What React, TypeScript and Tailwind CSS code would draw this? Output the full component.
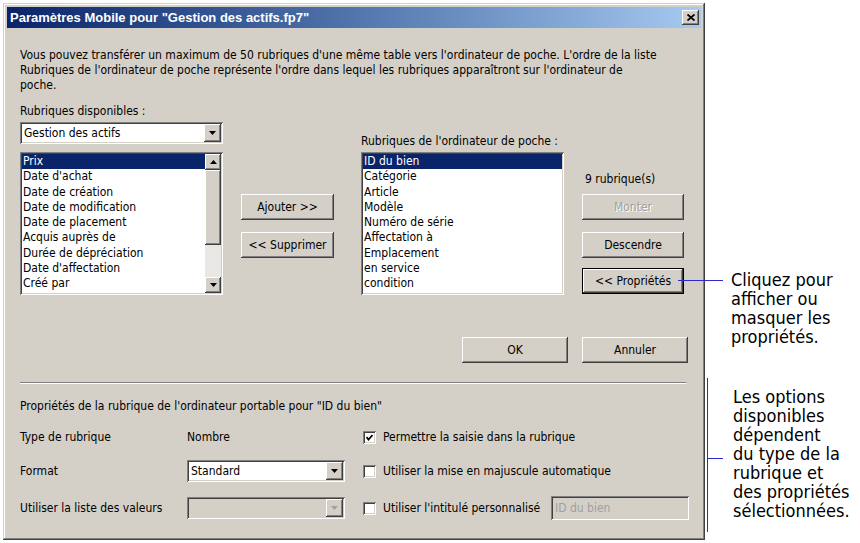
import React from 'react';

const raised =
  'bg-[#d4d0c8] shadow-[inset_-1px_-1px_#404040,inset_1px_1px_#ffffff,inset_-2px_-2px_#808080,inset_2px_2px_#d4d0c8]';
const sunken =
  'shadow-[inset_1px_1px_#808080,inset_-1px_-1px_#ffffff,inset_2px_2px_#404040,inset_-2px_-2px_#d4d0c8]';

function Arrow({ dir = 'down', disabled = false }: { dir?: 'up' | 'down'; disabled?: boolean }) {
  const pts = dir === 'down' ? '0,0 7,0 3.5,4' : '0,4 7,4 3.5,0';
  return (
    <svg width="7" height="4" viewBox="0 0 7 4">
      <polygon points={pts} fill={disabled ? '#a0a0a0' : '#000'} />
    </svg>
  );
}

function Button({
  children,
  w,
  disabled,
  isDefault,
}: {
  children: React.ReactNode;
  w: string;
  disabled?: boolean;
  isDefault?: boolean;
}) {
  if (isDefault) {
    return (
      <div className={`${w} h-[26px] border border-black flex`}>
        <div className={`${raised} flex-1 flex items-center justify-center`}>{children}</div>
      </div>
    );
  }
  return (
    <div
      className={`${raised} ${w} h-[26px] flex items-center justify-center ${
        disabled ? 'text-[#a0a0a0] [text-shadow:1px_1px_#fff]' : ''
      }`}
    >
      {children}
    </div>
  );
}

function Combo({ value, w, disabled }: { value?: string; w: string; disabled?: boolean }) {
  return (
    <div
      className={`${sunken} ${w} h-[22px] ${disabled ? 'bg-[#d4d0c8]' : 'bg-white'} flex items-center p-[2px]`}
    >
      <span className="flex-1 pl-[2px]">{value}</span>
      <div className={`${raised} w-[17px] h-[18px] flex items-center justify-center`}>
        <Arrow disabled={disabled} />
      </div>
    </div>
  );
}

function ListBox({ items, w, scroll }: { items: string[]; w: string; scroll?: boolean }) {
  return (
    <div className={`${sunken} ${w} h-[143px] bg-white p-[2px] flex`}>
      <div className="flex-1 flex flex-col">
        {items.map((it, i) => (
          <div
            key={it}
            className={`h-[15.3px] leading-[15px] pl-[1px] ${i === 0 ? 'bg-[#0a246a] text-white' : ''}`}
          >
            {it}
          </div>
        ))}
      </div>
      {scroll && (
        <div className="w-[16px] flex flex-col bg-[#e9e7e3]">
          <div className={`${raised} h-[16px] flex items-center justify-center`}>
            <Arrow dir="up" />
          </div>
          <div className={`${raised} h-[75px]`} />
          <div className="flex-1" />
          <div className={`${raised} h-[16px] flex items-center justify-center`}>
            <Arrow />
          </div>
        </div>
      )}
    </div>
  );
}

function Check({ checked }: { checked?: boolean }) {
  return (
    <div className={`${sunken} w-[13px] h-[13px] bg-white flex items-center justify-center`}>
      {checked && (
        <svg width="7" height="7" viewBox="0 0 7 7">
          <polyline points="0.5,3 2.5,5.5 6.5,1" fill="none" stroke="#000" strokeWidth="1.8" />
        </svg>
      )}
    </div>
  );
}

export default function App() {
  const dispo = [
    'Prix',
    "Date d'achat",
    'Date de création',
    'Date de modification',
    'Date de placement',
    'Acquis auprès de',
    'Durée de dépréciation',
    "Date d'affectation",
    'Créé par',
  ];
  const poche = [
    'ID du bien',
    'Catégorie',
    'Article',
    'Modèle',
    'Numéro de série',
    'Affectation à',
    'Emplacement',
    'en service',
    'condition',
  ];

  return (
    <div className="w-[860px] h-[543px] bg-white flex overflow-hidden">
      {/* dialog */}
      <div
        className="ml-[3px] mt-[3px] w-[702px] h-[537px] bg-[#d4d0c8] p-[4px] flex flex-col text-[12px] text-black font-['DejaVu_Sans_Condensed','DejaVu_Sans',sans-serif] shadow-[inset_-1px_-1px_#404040,inset_1px_1px_#d4d0c8,inset_-2px_-2px_#808080,inset_2px_2px_#ffffff]"
      >
        <div className="h-[21px] bg-gradient-to-r from-[#0a246a] to-[#a6caf0] flex items-center pl-[3px] pr-[2px]">
          <span className="flex-1 text-white font-bold text-[13px] font-['Liberation_Sans',Arial,sans-serif]">
            Paramètres Mobile pour "Gestion des actifs.fp7"
          </span>
          <div className={`${raised} w-[17px] h-[15px] flex items-center justify-center`}>
            <svg width="8" height="7" viewBox="0 0 8 7">
              <path d="M0.5 0.5 L7.5 6.5 M7.5 0.5 L0.5 6.5" stroke="#000" strokeWidth="1.8" />
            </svg>
          </div>
        </div>

        <div className="pl-[13px] pr-[14px] flex flex-col">
          <p className="mt-[20px] leading-[15px]">
            Vous pouvez transférer un maximum de 50 rubriques d'une même table vers l'ordinateur de poche. L'ordre de la
            liste
            <br />
            Rubriques de l'ordinateur de poche représente l'ordre dans lequel les rubriques apparaîtront sur l'ordinateur
            de
            <br />
            poche.
          </p>
          <div className="mt-[11px] leading-[15px]">Rubriques disponibles :</div>

          <div className="flex mt-[3px]">
            <div className="flex flex-col gap-[8px]">
              <Combo value="Gestion des actifs" w="w-[203px]" />
              <ListBox items={dispo} w="w-[203px]" scroll />
            </div>

            <div className="ml-[18px] mt-[72px] flex flex-col gap-[12px]">
              <Button w="w-[93px]">Ajouter &gt;&gt;</Button>
              <Button w="w-[93px]">&lt;&lt; Supprimer</Button>
            </div>

            <div className="ml-[27px] flex flex-col">
              <div className="mt-[12px] h-[15px] leading-[15px]">Rubriques de l'ordinateur de poche :</div>
              <div className="mt-[3px]">
                <ListBox items={poche} w="w-[203px]" />
              </div>
            </div>

            <div className="ml-[18px] flex flex-col">
              <div className="mt-[50px] leading-[15px] pl-[3px]">9 rubrique(s)</div>
              <div className="mt-[7px] flex flex-col">
                <Button w="w-[102px]" disabled>
                  Monter
                </Button>
                <div className="mt-[12px]">
                  <Button w="w-[102px]">Descendre</Button>
                </div>
                <div className="mt-[10px]">
                  <Button w="w-[102px]" isDefault>
                    &lt;&lt; Propriétés
                  </Button>
                </div>
              </div>
            </div>
          </div>

          <div className="mt-[42px] mr-[-1px] flex justify-end gap-[14px]">
            <Button w="w-[106px]">OK</Button>
            <Button w="w-[106px]">Annuler</Button>
          </div>

          <div className="mt-[19px] h-[2px] w-[666px] border-t border-[#808080] border-b border-b-white" />

          <div className="mt-[15px] leading-[15px]">
            Propriétés de la rubrique de l'ordinateur portable pour "ID du bien"
          </div>

          <div className="flex mt-[12px]">
            <div className="flex flex-col">
              <div className="h-[22px] flex items-center">
                <span className="w-[167px]">Type de rubrique</span>
                <span>Nombre</span>
              </div>
              <div className="h-[22px] mt-[12px] flex items-center">
                <span className="w-[167px]">Format</span>
                <Combo value="Standard" w="w-[158px]" />
              </div>
              <div className="h-[24px] mt-[14px] flex items-center">
                <span className="w-[167px]">Utiliser la liste des valeurs</span>
                <Combo w="w-[158px]" disabled />
              </div>
            </div>

            <div className="ml-[18px] flex flex-col">
              <div className="h-[22px] flex items-center gap-[7px]">
                <Check checked />
                <span>Permettre la saisie dans la rubrique</span>
              </div>
              <div className="h-[22px] mt-[12px] flex items-center gap-[7px]">
                <Check />
                <span>Utiliser la mise en majuscule automatique</span>
              </div>
              <div className="h-[24px] mt-[14px] flex items-center gap-[7px]">
                <Check />
                <span className="w-[161px]">Utiliser l'intitulé personnalisé</span>
                <div
                  className={`${sunken} w-[138px] h-[24px] bg-[#d4d0c8] flex items-center pl-[4px] text-[#a0a0a0]`}
                >
                  ID du bien
                </div>
              </div>
            </div>
          </div>
        </div>
      </div>

      {/* annotations */}
      <div className="relative flex-1 flex flex-col text-[18px] leading-[19px] text-black font-['DejaVu_Sans_Condensed',sans-serif]">
        <div className="absolute left-[-27px] top-[280px] w-[45px] h-px bg-[#2a2ad0]" />
        <div className="absolute left-[2px] top-[378px] w-px h-[154px] bg-[#2a2ad0]" />
        <div className="absolute left-[2px] top-[458px] w-[16px] h-px bg-[#2a2ad0]" />

        <div className="mt-[270px] pl-[26px]">
          Cliquez pour
          <br />
          afficher ou
          <br />
          masquer les
          <br />
          propriétés.
        </div>
        <div className="mt-[41px] pl-[28px]">
          Les options
          <br />
          disponibles
          <br />
          dépendent
          <br />
          du type de la
          <br />
          rubrique et
          <br />
          des propriétés
          <br />
          sélectionnées.
        </div>
      </div>
    </div>
  );
}
